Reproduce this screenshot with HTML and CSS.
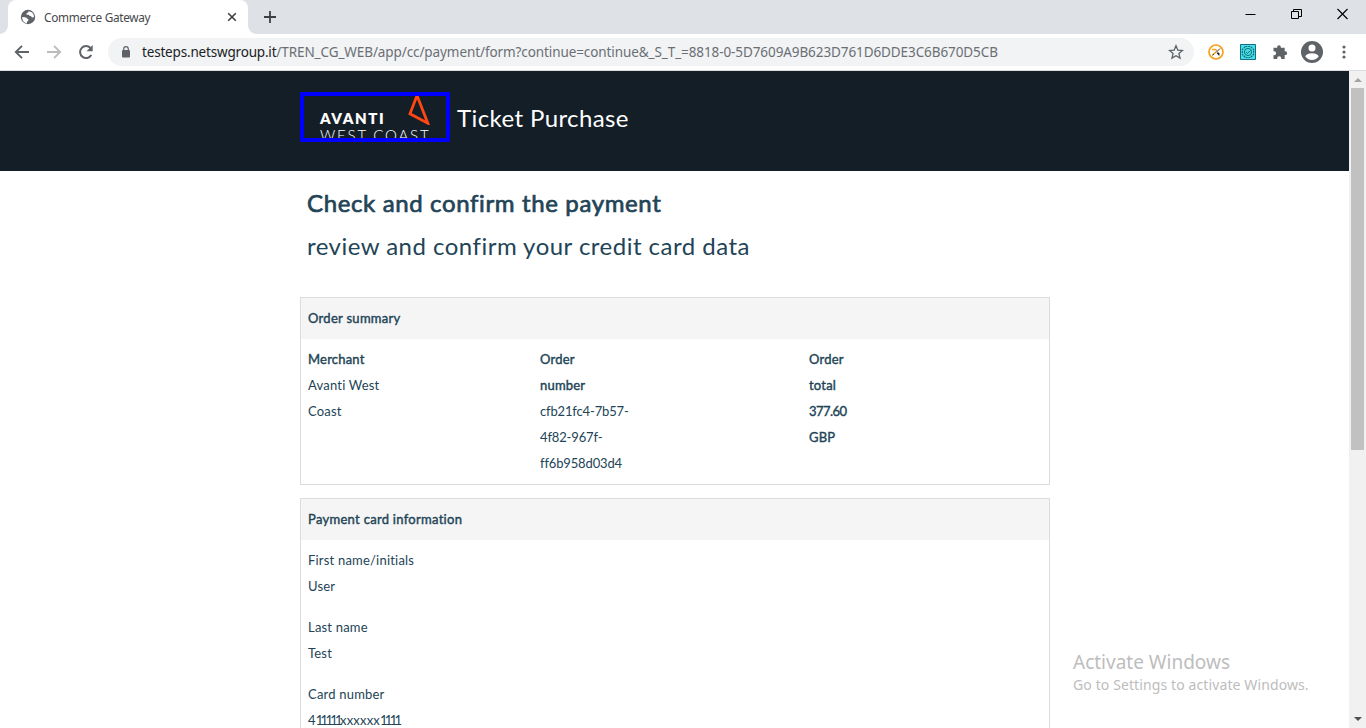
FILE: index.html
```
<!DOCTYPE html>
<html lang="en">
<head>
<meta charset="utf-8">
<title>Commerce Gateway</title>
<link rel="stylesheet" href="styles.css">
</head>
<body>
<div class="browser">
  <div class="tabstrip">
    <div class="tab">
      <svg class="favicon" width="16" height="16" viewBox="0 0 16 16"><circle cx="8" cy="8" r="7.200" fill="#5f6368"/><path d="M2.200 8.100 5 8.300q2 .1 2.200 1.500l1.200.5-.2 1.700-1.200.6v1.800A6 6 0 0 1 2.200 8.100zM8.800 2.300 8 3.600 6.600 4.200 6.500 5.700h2.300l1 1.200 1.200.2.8 1.300 2.200-.2a6 6 0 0 0-5.200-5.900z" fill="#fff"/></svg>
      <span class="tab-title">Commerce Gateway</span>
      <svg class="tab-close" width="10" height="10" viewBox="0 0 10 10"><path d="M1.200 1.200 8.800 8.800M8.800 1.200 1.200 8.800" stroke="#3c4043" stroke-width="1.600"/></svg>
    </div>
    <svg class="new-tab" width="14" height="14" viewBox="0 0 14 14"><path d="M7 1v12M1 7h12" stroke="#3c4043" stroke-width="1.800"/></svg>
    <div class="window-controls">
      <svg width="11" height="12" viewBox="0 0 11 12"><path d="M.5 6.500h10" stroke="#000"/></svg>
      <svg width="11" height="12" viewBox="0 0 11 12"><path d="M.5 3.500h7v7h-7zM2.500 3.500v-2h8v7h-3" fill="none" stroke="#000"/></svg>
      <svg width="11" height="12" viewBox="0 0 11 12"><path d="m.5 1 10 10M10.500 1l-10 10" stroke="#000" stroke-width="1.100"/></svg>
    </div>
  </div>
  <div class="toolbar">
    <svg class="nav" width="16" height="16" viewBox="0 0 16 16"><path d="M15 8H2.500M8 1.800 1.800 8 8 14.200" fill="none" stroke="#5f6368" stroke-width="1.900"/></svg>
    <svg class="nav" width="16" height="16" viewBox="0 0 16 16"><path d="M1 8h12.500M8 1.800 14.200 8 8 14.200" fill="none" stroke="#babcbe" stroke-width="1.900"/></svg>
    <svg class="nav" width="16" height="16" viewBox="0 0 16 16"><path d="M13.300 11A6 6 0 1 1 12.500 4" fill="none" stroke="#5f6368" stroke-width="2"/><path d="M14.700 1v6.200H8.500z" fill="#5f6368"/></svg>
    <div class="omnibox">
      <svg width="10" height="12" viewBox="0 0 10 12"><rect x="1" y="4" width="8" height="7.500" rx="1" fill="#5f6368"/><path d="M2.700 4.500V3a2.300 2.300 0 0 1 4.600 0v1.500" fill="none" stroke="#5f6368" stroke-width="1.200"/></svg>
      <span class="url"><b>testeps.netswgroup.it</b>/TREN_CG_WEB/app/cc/payment/form?continue=continue&amp;_S_T_=8818-0-5D7609A9B623D761D6DDE3C6B670D5CB</span>
      <svg class="star" width="16" height="16" viewBox="0 0 16 16"><path d="m8 1.800 1.800 4.300 4.700.4-3.600 3 1.100 4.600L8 11.700l-4 2.400 1.100-4.600-3.600-3 4.700-.4z" fill="none" stroke="#5f6368" stroke-width="1.300"/></svg>
    </div>
    <div class="extensions">
      <svg width="16" height="16" viewBox="0 0 16 16"><circle cx="8" cy="8" r="7" fill="#fff" stroke="#f9a01b" stroke-width="1.700"/><path d="M4 5.500h3.500L9 7M4.500 11 8 8" fill="none" stroke="#f9a01b" stroke-width="1.500"/><path d="M12 4.500 8 8.500M9 9h2v2.300z" stroke="#222" fill="#222" stroke-width=".9"/><path d="m4.500 11.200 1.300-1" stroke="#222"/></svg>
      <svg width="16" height="16" viewBox="0 0 16 16"><path d="M.5.500h15v15H.5z" fill="#43e0ec" stroke="#176d78"/><path d="M5.400 2.500h5.200l3 3v5l-3 3H5.400l-3-3v-5z" fill="none" stroke="#176d78" stroke-width="1.200" stroke-dasharray="2 .7"/><circle cx="8" cy="8" r="3.600" fill="none" stroke="#176d78"/><path d="m6 8 1.500 1.500L10.300 6.500" fill="none" stroke="#176d78"/></svg>
      <svg width="16" height="16" viewBox="0 0 16 16"><path d="M1.500 3.700h3.700V3a1.800 1.800 0 0 1 3.600 0v.7h3.900v3.600h.6a1.800 1.800 0 0 1 0 3.700h-.6v3.900H9.200v-.6a2 2 0 0 0-4 0v.6H1.500v-3.700h.6a2 2 0 0 0 0-4h-.6z" fill="#5f6368"/></svg>
      <svg class="avatar" width="22" height="22" viewBox="0 0 22 22"><circle cx="11" cy="11" r="11" fill="#5f6368"/><circle cx="11" cy="7" r="3.500" fill="#fff"/><path d="M4.200 15.300q1.800-3.100 6.800-3.100t6.800 3.100a8 8 0 0 1-13.600 0z" fill="#fff"/></svg>
      <svg width="4" height="16" viewBox="0 0 4 16"><circle cx="2" cy="3" r="1.600" fill="#5f6368"/><circle cx="2" cy="8" r="1.600" fill="#5f6368"/><circle cx="2" cy="13" r="1.600" fill="#5f6368"/></svg>
    </div>
  </div>
  <div class="viewport">
    <div class="page">
      <header class="banner">
        <div class="logo">
          <div class="brand">
            <span class="brand-name">AVANTI</span>
            <span class="brand-line">WEST COAST</span>
            <svg class="brand-mark" width="22" height="30" viewBox="0 0 22 30"><path d="M9 .5 2 18.800l17.800 9.400z" fill="none" stroke="#ff4713" stroke-width="2.800"/></svg>
          </div>
        </div>
        <span class="banner-title">Ticket Purchase</span>
      </header>
      <main class="content">
        <h1 class="title">Check and confirm the payment</h1>
        <p class="subtitle">review and confirm your credit card data</p>
        <section class="panel">
          <h2 class="panel-head">Order summary</h2>
          <div class="panel-body order">
            <div><strong>Merchant</strong><br>Avanti West<br>Coast</div>
            <div><strong>Order<br>number</strong><br><span class="ref">cfb21fc4-7b57-<br>4f82-967f-<br>ff6b958d03d4</span></div>
            <div><strong>Order<br>total<br><span class="amount">377.60</span><br>GBP</strong></div>
          </div>
        </section>
        <section class="panel">
          <h2 class="panel-head">Payment card information</h2>
          <div class="panel-body card">
            <div>First name/initials<br>User</div>
            <div>Last name<br>Test</div>
            <div>Card number<br>4<span class="ones">11111</span>xxxxxx<span class="ones">1111</span></div>
          </div>
        </section>
      </main>
    </div>
    <div class="scrollbar">
      <svg width="17" height="17" viewBox="0 0 17 17"><path d="m5 11 4-4 4 4z" fill="#a3a3a3"/></svg>
      <div class="thumb"></div>
      <svg class="down" width="17" height="17" viewBox="0 0 17 17"><path d="m5 6 4 4 4-4z" fill="#505050"/></svg>
    </div>
  </div>
  <div class="watermark">
    <div class="wm-title">Activate Windows</div>
    <div class="wm-text">Go to Settings to activate Windows.</div>
  </div>
</div>
</body>
</html>
```
FILE: styles.css
```
* { box-sizing: border-box; }
body { margin: 0; overflow: hidden; }
svg { display: block; flex: none; }
.browser { position: relative; width: 1366px; height: 728px; display: flex; flex-direction: column; overflow: hidden; background: #fff; font-family: "Noto Sans", sans-serif; white-space: nowrap; }

.tabstrip { height: 34px; flex: none; display: flex; align-items: center; background: #dee1e6; padding-left: 8px; }
.tab { position: relative; width: 240px; height: 34px; display: flex; align-items: center; padding: 0 11px 0 12px; background: #fff; border-radius: 8px 8px 0 0; }
.tab::before, .tab::after { content: ""; position: absolute; bottom: 0; width: 8px; height: 8px; }
.tab::before { left: -8px; background: radial-gradient(circle at 0 0, #dee1e6 7.5px, #fff 8px); }
.tab::after { right: -8px; background: radial-gradient(circle at 100% 0, #dee1e6 7.5px, #fff 8px); }
.tab-title { flex: 1; margin-left: 8px; font-size: 11.8px; letter-spacing: -0.3px; color: #45484c; }
.new-tab { margin-left: 15px; }
.window-controls { display: flex; gap: 35px; margin: -6px 18px 0 auto; }

.toolbar { height: 37px; flex: none; display: flex; align-items: center; border-bottom: 1px solid #dadce0; padding: 0 20px 0 14px; }
.nav { margin-right: 16px; }
.omnibox { width: 1086px; height: 28px; margin-left: -2px; display: flex; align-items: center; padding: 0 10px 0 13px; border-radius: 14px; background: #f1f3f4; }
.url { flex: 1; margin-left: 11px; font-size: 13.5px; letter-spacing: -0.09px; color: #6b6f74; }
.url b { font-weight: 400; letter-spacing: -0.18px; color: #202124; }
.extensions { flex: 1; display: flex; align-items: center; gap: 16px; margin-left: 14px; }
.avatar { margin: 0 3px 0 -3px; }

.viewport { flex: 1; min-height: 0; display: flex; }
.page { width: 1349px; overflow: hidden; font-family: Lato, sans-serif; color: #224456; }
.banner { height: 100px; display: flex; align-items: flex-start; padding: 21px 0 0 300px; background: #141e27; }
.logo { width: 150px; height: 50px; border: 4px solid #00f; overflow: hidden; }
.brand { position: relative; padding: 14px 0 0 16px; color: #fff; }
.brand-name, .brand-line { display: block; height: 16px; line-height: 16px; }
.brand-name { font-size: 15px; font-weight: 800; letter-spacing: 1.6px; }
.brand-line { font-size: 15px; line-height: 18px; font-weight: 300; letter-spacing: 1.8px; }
.brand-mark { position: absolute; left: 104px; top: -1px; }
.banner-title { margin-left: 7px; line-height: 52px; font-size: 24px; letter-spacing: 0.4px; color: #fff; }

.content { width: 750px; margin-left: 300px; }
.title, .subtitle { margin: 0 0 0 7px; height: 43px; line-height: 43px; font-size: 24px; font-weight: 400; }
.title { margin-top: 10px; letter-spacing: 0.63px; -webkit-text-stroke: 0.7px currentColor; }
.subtitle { letter-spacing: 0.48px; margin-bottom: 30px; }
.panel { margin-bottom: 13px; border: 1px solid #dcdcdc; font-size: 13px; line-height: 26px; letter-spacing: 0.2px; }
.panel-head { margin: 0; height: 41px; padding-left: 7px; line-height: 41px; font-size: 13px; font-weight: 400; letter-spacing: 0.29px; background: #f5f5f5; -webkit-text-stroke: 0.4px currentColor; }
.panel strong { font-weight: 400; -webkit-text-stroke: 0.4px currentColor; }
.panel-body { padding: 7px 7px 8px; }
.order { display: grid; grid-template-columns: 232px 269px 1fr; }
.ref { letter-spacing: -0.15px; }
.amount { letter-spacing: -0.55px; }
.card { display: grid; gap: 15px; }
.ones { letter-spacing: -2.7px; }

.scrollbar { width: 17px; display: flex; flex-direction: column; background: #f1f1f1; }
.thumb { width: 13px; height: 362px; margin-left: 2px; background: #c1c1c1; }
.down { margin-top: auto; }

.watermark { position: absolute; left: 1073px; top: 650px; color: #bdbdbd; }
.wm-title { height: 24px; line-height: 24px; font-size: 19px; }
.wm-text { height: 22px; line-height: 22px; font-size: 14px; letter-spacing: 0.11px; }
```
